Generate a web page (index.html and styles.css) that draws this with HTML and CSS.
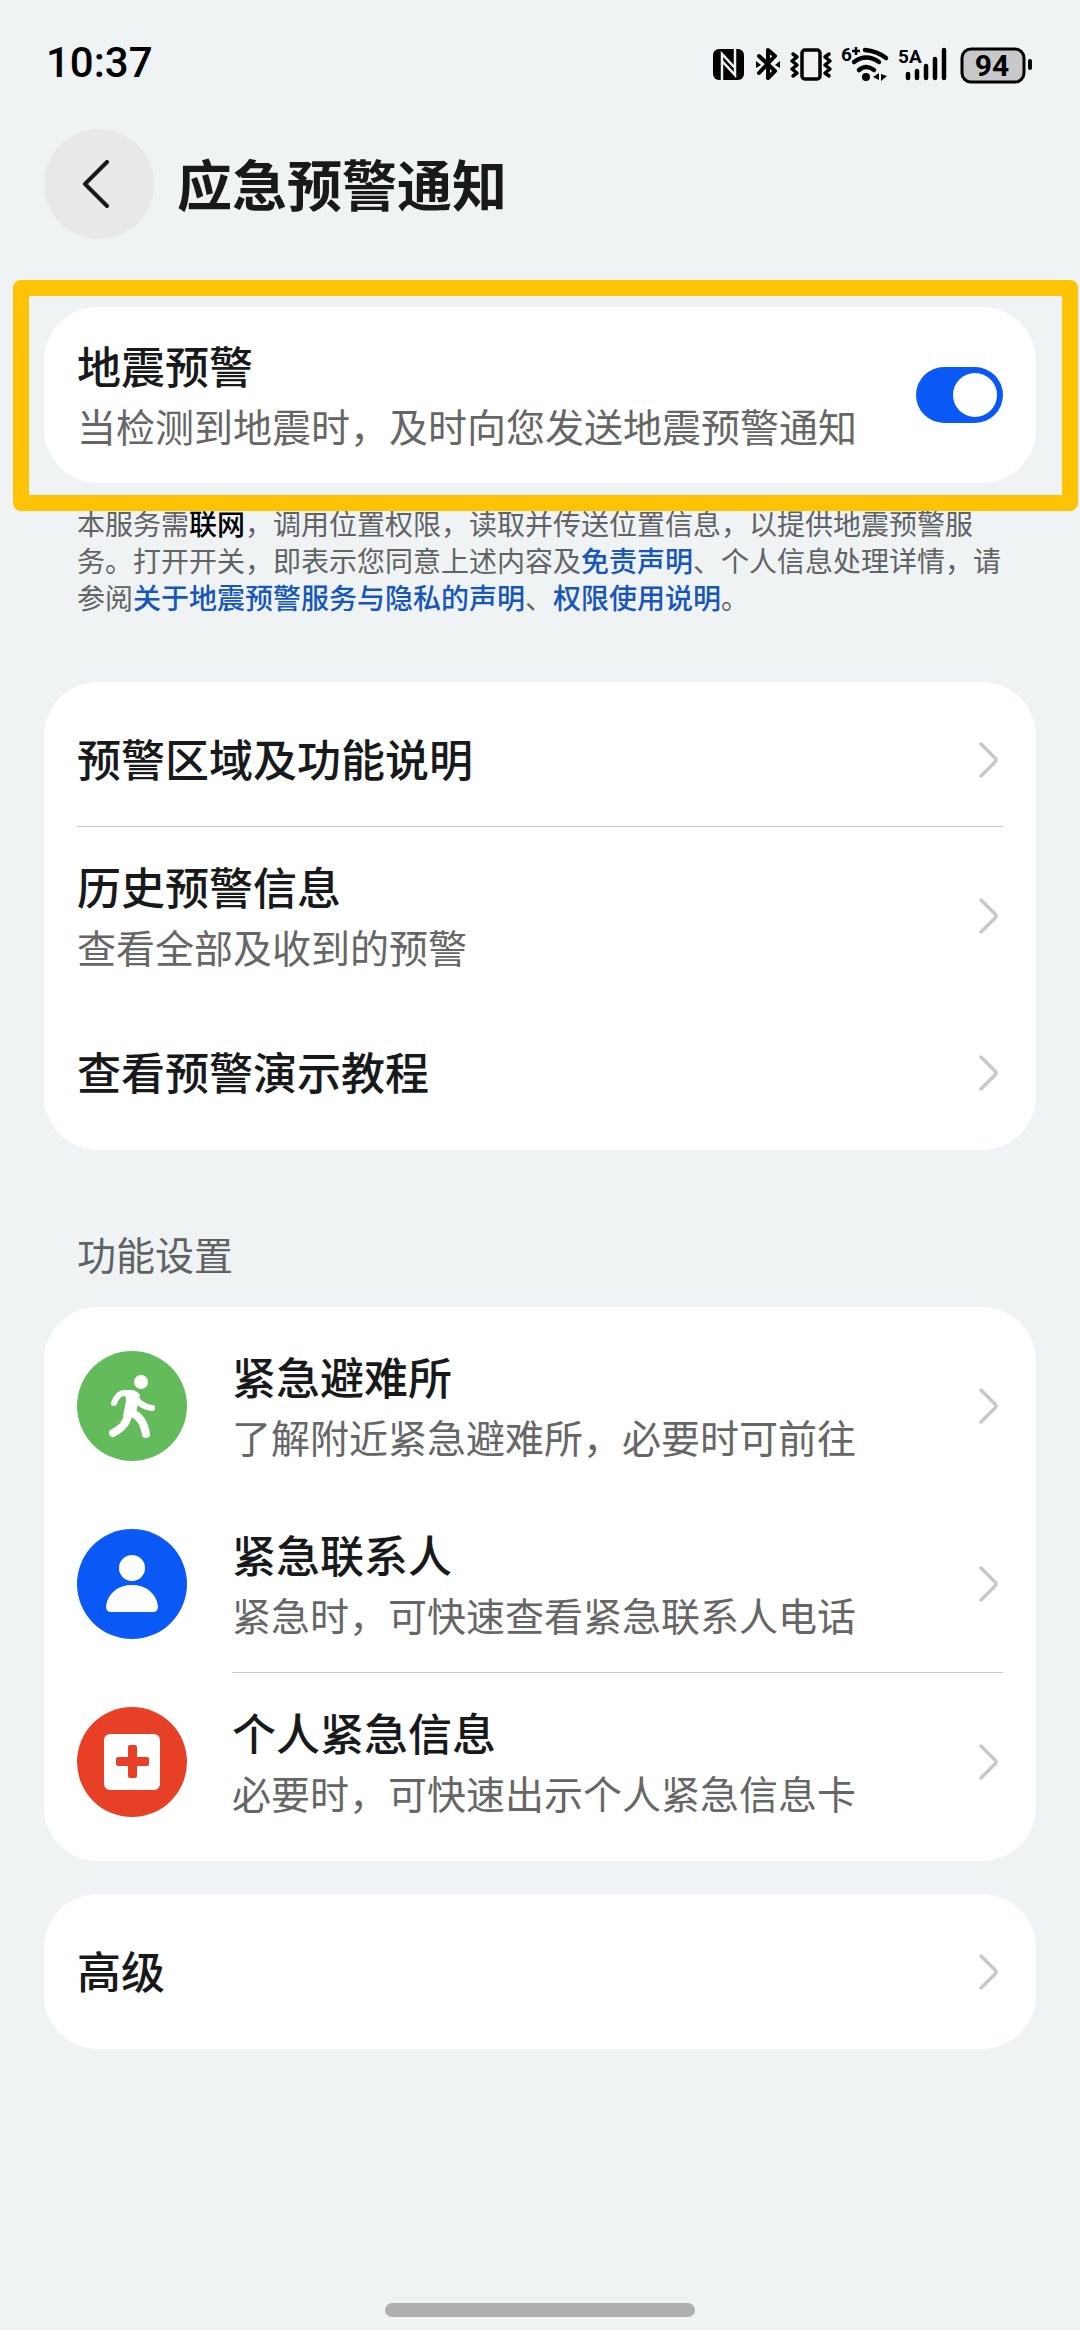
FILE: index.html
```html
<!DOCTYPE html>
<html lang="zh-CN">
<head>
    <meta charset="UTF-8">
    <meta name="viewport" content="width=device-width, initial-scale=1.0">
    <title>应急预警通知</title>
    <link rel="stylesheet" href="styles.css">
</head>
<body>

<!-- Chevron dipakai ulang di setiap baris -->
<svg class="sprite" aria-hidden="true">
    <symbol id="chevron" viewBox="0 0 20 36">
        <path d="M2 2 L16 16 Q18 18 16 20 L2 34" fill="none" stroke="currentColor" stroke-width="3.5" stroke-linecap="round"/>
    </symbol>
</svg>

<div class="status-bar">
    <span class="time">10:37</span>
    <svg class="status-icons" viewBox="0 0 322 46" aria-hidden="true">
        <!-- NFC -->
        <rect x="1" y="9" width="31" height="31" rx="6"/>
        <path d="M10 41 V14 L23 28 M23 8 V35 L10 21" fill="none" stroke="#eff3f4" stroke-width="2.5"/>
        <!-- Bluetooth -->
        <g fill="none" stroke="#000" stroke-width="4" stroke-linejoin="round" stroke-linecap="round">
            <path d="M47 16 L63 31 L56 38 V10 L63 16 L47 33"/>
        </g>
        <path d="M44 21 L49 25 L44 28 Z M68 21 L63 25 L68 28 Z"/>
        <!-- Getar -->
        <g fill="none" stroke="#000" stroke-width="3.5" stroke-linejoin="round" stroke-linecap="round">
            <rect x="90" y="10" width="18" height="29" rx="3"/>
            <path d="M81 14 L85 17 L80 21 L85 25 L80 29 L85 33 L81 36"/>
            <path d="M117 14 L113 17 L118 21 L113 25 L118 29 L113 33 L117 36"/>
        </g>
        <!-- Wifi -->
        <text class="tag" x="129" y="21">6</text>
        <path d="M140 11 H148 M144 7 V15" fill="none" stroke="#000" stroke-width="2.5"/>
        <g fill="none" stroke="#000" stroke-width="4.5" stroke-linecap="round">
            <path d="M153 10 Q165 11 174 18"/>
            <path d="M142 22 Q154 13 167 22"/>
            <path d="M147 30 Q154 24 162 30"/>
        </g>
        <circle cx="154" cy="37" r="4"/>
        <path d="M167 33 V40 L161 37 Z M169 34 L175 36 L169 41 Z"/>
        <!-- Sinyal -->
        <text class="tag" x="186" y="23">5A</text>
        <g fill="none" stroke="#000" stroke-width="4.5" stroke-linecap="round">
            <path d="M196 34 V38 M205 31 V38 M214 26 V38 M223 19 V38 M232 10 V38"/>
        </g>
        <!-- Baterai -->
        <rect x="250" y="9" width="62" height="33" rx="9" fill="#c8c8ca" stroke="#000" stroke-width="3"/>
        <text class="battery" x="280" y="36" text-anchor="middle">94</text>
        <rect x="316" y="19" width="4" height="11" rx="2"/>
    </svg>
</div>

<header class="header">
    <button type="button" class="back" aria-label="返回">
        <svg viewBox="0 0 28 48"><path d="M25 2 L3 24 L25 46" fill="none" stroke="#18191b" stroke-width="4" stroke-linecap="round" stroke-linejoin="round"/></svg>
    </button>
    <h1>应急预警通知</h1>
</header>

<main>
    <div class="card card-switch">
        <div class="text">
            <label for="quake" class="title">地震预警</label>
            <p class="desc">当检测到地震时，及时向您发送地震预警通知</p>
        </div>
        <input type="checkbox" id="quake" class="switch" role="switch" checked>
        <div class="highlight"></div>
    </div>

    <p class="note">本服务需<strong>联网</strong>，调用位置权限，读取并传送位置信息，以提供地震预警服<br>务。打开开关，即表示您同意上述内容及<a href="#">免责声明</a>、个人信息处理详情，请<br>参阅<a href="#">关于地震预警服务与隐私的声明</a>、<a href="#">权限使用说明</a>。</p>

    <nav class="card">
        <a href="#" class="row">
            <span class="body line"><span class="text"><span class="title">预警区域及功能说明</span></span><svg class="chevron"><use href="#chevron"/></svg></span>
        </a>
        <a href="#" class="row row-double">
            <span class="body">
                <span class="text"><span class="title">历史预警信息</span><span class="desc">查看全部及收到的预警</span></span>
                <svg class="chevron"><use href="#chevron"/></svg>
            </span>
        </a>
        <a href="#" class="row">
            <span class="body"><span class="text"><span class="title">查看预警演示教程</span></span><svg class="chevron"><use href="#chevron"/></svg></span>
        </a>
    </nav>

    <h2>功能设置</h2>

    <nav class="card">
        <a href="#" class="row row-double">
            <svg class="icon" viewBox="0 0 110 110">
                <circle cx="55" cy="55" r="55" fill="#64bb5c"/>
                <circle cx="64" cy="31" r="7" fill="#fff"/>
                <g fill="none" stroke="#fff" stroke-linecap="round" stroke-linejoin="round">
                    <path d="M37 52 Q41 42 47 42 L57 43 Q61 55 75 57" stroke-width="6"/>
                    <path d="M56 46 L51 63 Q50 75 36 82" stroke-width="8"/>
                    <path d="M55 62 Q66 66 69 83" stroke-width="8"/>
                </g>
                <path d="M48 40 Q58 37 63 44 L58 66 L46 65 L49 50 Z" fill="#fff"/>
            </svg>
            <span class="body">
                <span class="text"><span class="title">紧急避难所</span><span class="desc">了解附近紧急避难所，必要时可前往</span></span>
                <svg class="chevron"><use href="#chevron"/></svg>
            </span>
        </a>
        <a href="#" class="row row-double">
            <svg class="icon" viewBox="0 0 110 110">
                <circle cx="55" cy="55" r="55" fill="#0a59f7"/>
                <circle cx="55" cy="39" r="13" fill="#fff"/>
                <path d="M34 83 Q29 83 29 77 C31 64 41 56 55 56 C69 56 79 64 81 77 Q81 83 76 83 Z" fill="#fff"/>
            </svg>
            <span class="body line">
                <span class="text"><span class="title">紧急联系人</span><span class="desc">紧急时，可快速查看紧急联系人电话</span></span>
                <svg class="chevron"><use href="#chevron"/></svg>
            </span>
        </a>
        <a href="#" class="row row-double">
            <svg class="icon" viewBox="0 0 110 110">
                <circle cx="55" cy="55" r="55" fill="#e84026"/>
                <rect x="27" y="27" width="56" height="56" rx="6" fill="#fff"/>
                <path d="M39 52 Q39 50 41 50 H51 V40 Q51 38 53 38 H58 Q60 38 60 40 V50 H70 Q72 50 72 52 V57 Q72 59 70 59 H60 V69 Q60 71 58 71 H53 Q51 71 51 69 V59 H41 Q39 59 39 57 Z" fill="#e84026"/>
            </svg>
            <span class="body">
                <span class="text"><span class="title">个人紧急信息</span><span class="desc">必要时，可快速出示个人紧急信息卡</span></span>
                <svg class="chevron"><use href="#chevron"/></svg>
            </span>
        </a>
    </nav>

    <nav class="card card-next">
        <a href="#" class="row">
            <span class="body"><span class="text"><span class="title">高级</span></span><svg class="chevron"><use href="#chevron"/></svg></span>
        </a>
    </nav>
</main>

<div class="home-bar"></div>

</body>
</html>
```
FILE: styles.css
```css
* {
    box-sizing: border-box;
}

body {
    display: flex;
    flex-direction: column;
    min-height: 100vh;
    margin: 0;
    background-color: #eff3f4;
    color: #18191b;
    font-family: "Noto Sans CJK SC", sans-serif;
}

h1, h2, p {
    margin: 0;
}

a {
    color: inherit;
    text-decoration: none;
}

.sprite {
    display: none;
}

/* Status bar */
.status-bar {
    display: flex;
    align-items: center;
    justify-content: space-between;
    padding: 40px 46px 43px;
}

.time {
    color: #000;
    font-family: Roboto, sans-serif;
    font-size: 42px;
    font-weight: 500;
    line-height: 46px;
}

.status-icons {
    width: 322px;
    height: 46px;
    font-family: Roboto, sans-serif;
}

.tag {
    font-size: 19px;
    font-weight: 700;
}

.battery {
    font-size: 30px;
    font-weight: 700;
}

/* Header */
.header {
    display: flex;
    align-items: center;
    gap: 23px;
    padding: 0 44px;
    margin-bottom: 68px;
}

.back {
    display: flex;
    align-items: center;
    justify-content: center;
    width: 110px;
    height: 110px;
    padding: 0 6px 0 0;
    border: none;
    border-radius: 50%;
    background-color: #e7e8ea;
    cursor: pointer;
}

.back svg {
    width: 28px;
    height: 48px;
}

h1 {
    padding-bottom: 4px;
    font-size: 55px;
    font-weight: 700;
    line-height: 72px;
}

/* Kartu */
main {
    padding: 0 44px;
}

.card {
    padding: 10px 33px;
    border-radius: 54px;
    background-color: #fff;
}

.card-next {
    margin-top: 33px;
}

.card-switch {
    position: relative;
    display: flex;
    align-items: center;
    justify-content: space-between;
    padding: 26px 33px;
}

/* Bingkai kuning di sekeliling kartu pertama */
.highlight {
    position: absolute;
    inset: -27px -42px -28px -31px;
    border: 16px solid #fdc304;
    border-radius: 8px;
    pointer-events: none;
}

.row {
    display: flex;
    gap: 45px;
    align-items: center;
    height: 135px;
}

.row-double {
    height: 178px;
}

.body {
    display: flex;
    flex: 1;
    align-items: center;
    justify-content: space-between;
    height: 100%;
    padding-right: 4px;
    position: relative;
}

.line::after {
    content: "";
    position: absolute;
    left: 0;
    right: 0;
    bottom: 0;
    height: 1px;
    background-color: #c8c9ca;
}

.text {
    display: flex;
    flex-direction: column;
    padding-bottom: 4px;
}

.title {
    font-size: 44px;
    font-weight: 500;
    line-height: 64px;
}

.desc {
    color: #666;
    font-size: 39px;
    line-height: 56px;
}

.chevron {
    width: 20px;
    height: 36px;
    color: #c8c8c8;
}

.icon {
    width: 110px;
    height: 110px;
}

/* Tombol geser */
.switch {
    appearance: none;
    width: 87px;
    height: 56px;
    margin: 0;
    padding: 6px;
    border-radius: 28px;
    background-color: #c8c8c8;
    cursor: pointer;
}

.switch::before {
    content: "";
    display: block;
    width: 44px;
    height: 44px;
    border-radius: 50%;
    background-color: #fff;
}

.switch:checked {
    background-color: #0a59f7;
}

.switch:checked::before {
    margin-left: auto;
}

/* Keterangan */
.note {
    margin: 22px 33px 66px;
    color: #606264;
    font-size: 28px;
    line-height: 37px;
}

.note strong {
    color: #000;
    font-weight: 500;
}

.note a {
    color: #1656bd;
    font-weight: 500;
}

h2 {
    margin: 77px 33px 28px;
    color: #606264;
    font-size: 39px;
    font-weight: 400;
    line-height: 52px;
}

.home-bar {
    width: 310px;
    height: 14px;
    margin: auto auto 13px;
    border-radius: 7px;
    background-color: #adafb0;
}
```
